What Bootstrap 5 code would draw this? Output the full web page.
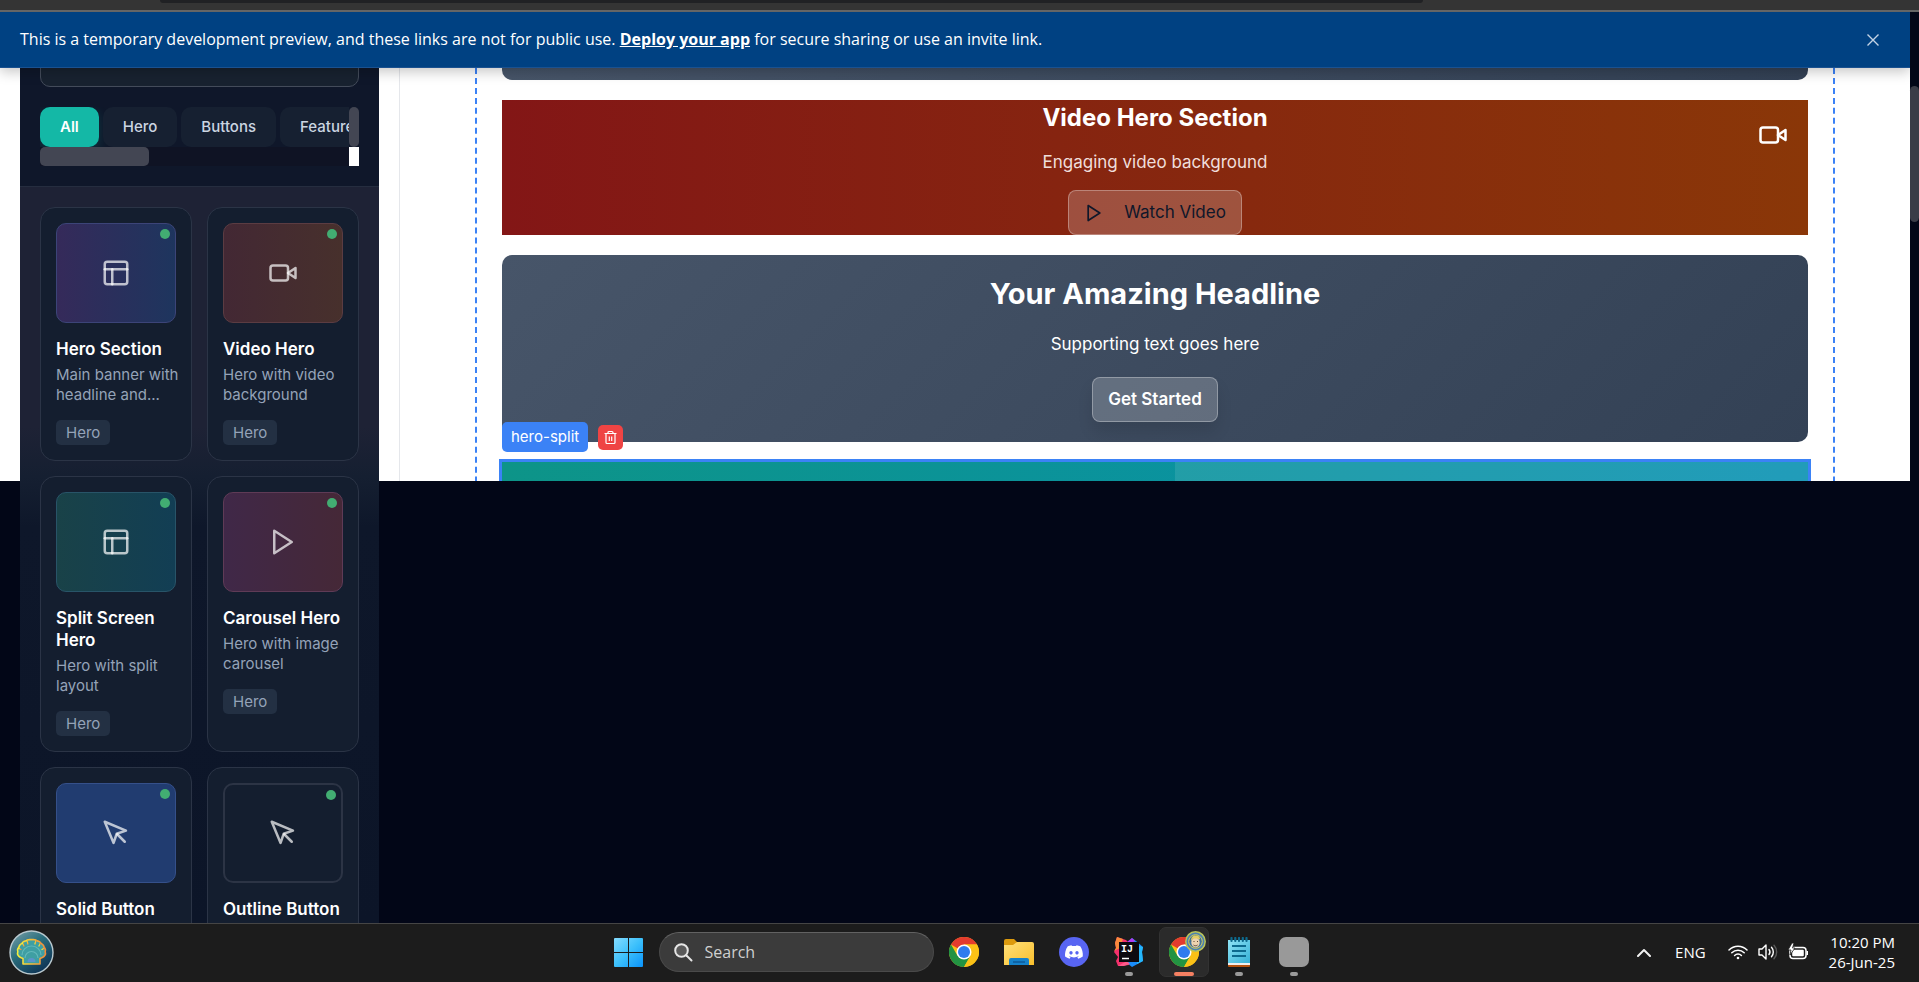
<!DOCTYPE html>
<html lang="en">
<head>
<meta charset="utf-8">
<meta name="viewport" content="width=device-width, initial-scale=1">
<title>Page builder preview</title>
<link href="https://cdn.jsdelivr.net/npm/bootstrap@5.3.0/dist/css/bootstrap.min.css" rel="stylesheet">
<style>
  :root { --ink: #020617; --panel: #0f172a; --accent: #3b82f6; --sheet: calc(50vh - 78px); }
  body { font-family: Inter, sans-serif; font-size: 17px; line-height: 25px; background: var(--ink); color: #fff; }
  svg { display: block; flex: none; }
  .line-icon { fill: none; stroke: currentColor; stroke-width: 2; stroke-linecap: round; stroke-linejoin: round; }

  /* browser chrome */
  .browser-strip { height: 12px; background: #343434; border-bottom: 2px solid #656565; padding: 0 496px 0 160px; }
  .address-edge { height: 3px; background: #202124; border-radius: 0 0 8px 8px; }
  .notice { background: #004182; height: 56px; border-bottom: 1px solid #1a5190; box-shadow: 0 4px 12px rgba(0,0,0,.22); padding: 0 25px 0 20px; font-family: "Open Sans", sans-serif; font-size: 16px; z-index: 3; }
  .notice a { color: #fff; font-weight: 700; }
  .notice button { width: 24px; height: 24px; color: #c3d3e4; }
  .page-scroll { width: 9px; padding-top: 74px; }
  .page-scroll div { height: 136px; background: #3a3c47; border-radius: 5px; }

  .stage { background: linear-gradient(#fff, #fff) no-repeat 0 0 / 100% var(--sheet); padding-left: 20px; }

  /* sidebar */
  .sidebar { width: 359px; }
  .side-head { background: var(--panel); padding: 0 20px 20px; border-bottom: 1px solid #252d3f; }
  .side-search { height: 50px; margin-top: -31px; background: #182230; border: 1px solid #434b5a; border-radius: 10px; }
  .side-search:focus { background: #182230; }
  .filters { margin-top: 20px; }
  .filter-row { height: 40px; }
  .filter-row .btn { border: 0; border-radius: 10px; background: #162031; color: #cbd5e1; font-size: 15px; font-weight: 500; line-height: 20px; padding: 10px 20px; }
  .filter-row .btn.active { background: #14b8a6; color: #fff; font-weight: 600; box-shadow: 0 4px 12px rgba(20,184,166,.2); }
  .thumb-bar { background: #434653; border-radius: 5px; }
  .thumb-v { width: 10px; }
  .track-h { height: 19px; background: #0f1324; }
  .track-h .thumb-bar { width: 109px; }
  .corner { width: 10px; background: #fff; }
  .side-list { padding: 20px; background: linear-gradient(#1e2235 240px, #151f31 290px, #0e172a 340px, #0c1528 100%); }
  .comp-grid { display: grid; grid-template-columns: 1fr 1fr; gap: 15px; }
  .comp { background: #141e2f; border: 1px solid #2b3446; border-radius: 15px; padding: 15px; }
  .preview { height: 100px; border: 1px solid; border-radius: 10px; color: rgba(255,255,255,.7); }
  .dot { width: 10px; height: 10px; top: 5px; right: 5px; background: #42ad72; border-radius: 50%; }
  .comp h3 { font-size: 17px; font-weight: 600; line-height: 22px; margin: 15px 0 5px; }
  .comp p { font-size: 15px; line-height: 20px; color: #94a3b8; margin: 0 -10px 15px 0; }
  .tagchip { display: block; width: fit-content; font-size: 15px; line-height: 25px; background: #233043; color: #94a3b8; border-radius: 5px; padding: 0 10px; }
  .p-hero { background: linear-gradient(90deg, #352a5a, #1e355e); border-color: #3c4478; }
  .p-video { background: linear-gradient(90deg, #432834, #47302c); border-color: #5b3c42; }
  .p-split { background: linear-gradient(90deg, #194248, #123e54); border-color: #285468; }
  .p-carousel { background: linear-gradient(90deg, #402848, #452837); border-color: #5f3b56; }
  .p-solid { background: #213c70; border-color: #35508a; }
  .p-outline { border-color: #2c3445; border-width: 2px; }

  /* canvas */
  .canvas { height: var(--sheet); margin-left: 20px; border-left: 1px solid #e5e7eb; padding: 0 75px; }
  .drop { border: dashed var(--accent); border-width: 0 2px; padding: 0 25px; gap: 20px; }
  .slate { background: linear-gradient(135deg, #475569, #334155); border-radius: 10px; }
  .slate-tail { height: 12px; border-radius: 0 0 10px 10px; background: linear-gradient(90deg, #475569, #334155); }
  .video-hero { background: linear-gradient(90deg, #831616, #8a3708); gap: 15px; }
  .video-hero h2 { font-size: 24px; font-weight: 700; line-height: 35px; }
  .video-hero p { color: #f0dedb; }
  .cam { top: 20px; right: 20px; }
  .slate-hero { padding: 20px; gap: 20px; }
  .slate-hero h1 { font-size: 29px; font-weight: 700; line-height: 37px; }
  .glass { height: 45px; font-size: 17px; border: 1px solid rgba(255,255,255,.3); background: rgba(255,255,255,.2); border-radius: 8px; padding: 0 15px; }
  .glass:hover { background: rgba(255,255,255,.3); }
  .glass.cast { color: #fff; font-weight: 600; box-shadow: 0 10px 15px rgba(0,0,0,.1); }
  .glass.dark { color: var(--panel); }
  .split-hero { height: 200px; outline: 3px solid var(--accent); background: linear-gradient(90deg, #0d9488, #0891b2); display: grid; grid-template-columns: 673fr 633fr; }
  .split-hero .half { grid-column: 2; background: rgba(255,255,255,.1); }
  .sel-tag { top: -40px; left: 0; gap: 10px; }
  .sel-tag span { background: var(--accent); border-radius: 5px; font-size: 15px; line-height: 30px; padding: 0 9px; }
  .sel-tag button { background: #ef4444; width: 25px; height: 25px; border-radius: 5px; color: #fff; }

  /* taskbar */
  .taskbar { height: 59px; background: #1c1c1c; border-top: 1px solid #454545; display: grid; grid-template-columns: 1fr auto 1fr; align-items: center; padding: 0 0 2px 3px; font-family: "Open Sans", sans-serif; z-index: 4; }
  .orb { padding-left: 6px; }
  .tile { width: 50px; height: 50px; border: 1px solid transparent; border-radius: 7px; padding: 0; }
  .tile.current { background: #2b2b2b; border-color: #323232; }
  .tile.open::after { content: ""; position: absolute; bottom: 0; left: 20px; width: 8px; height: 4px; border-radius: 2px; background: #9a9a9a; }
  .tile.current::after { left: 14px; width: 20px; background: #f58062; }
  .face { top: 3px; right: 2px; }
  .task-search { width: 275px; height: 40px; background: #3b3b3b; border: 1px solid #4a4a4a; border-top-color: #626262; border-radius: 20px; padding: 0 14px; gap: 12px; }
  .task-search input { background: none; border: 0; outline: 0; min-width: 0; font-size: 16px; color: #fff; padding: 0; }
  .task-search input::placeholder { color: #d0d0d0; opacity: 1; }
  .tray { padding-right: 24px; font-size: 15px; line-height: 20px; }
  .tray .status { gap: 10px; margin: 0 20px 0 22px; }
</style>
</head>
<body class="vh-100 overflow-hidden d-flex flex-column">

<svg class="d-none" aria-hidden="true">
  <symbol id="i-layout" viewBox="0 0 24 24"><rect x="3" y="3" width="18" height="18" rx="2"/><path d="M3 9h18"/><path d="M9 21V9"/></symbol>
  <symbol id="i-video" viewBox="0 0 24 24"><path d="m22 8-6 4 6 4V8Z"/><rect x="2" y="6" width="14" height="12" rx="2"/></symbol>
  <symbol id="i-play" viewBox="0 0 24 24"><path d="M5 3l14 9-14 9V3z"/></symbol>
  <symbol id="i-pointer" viewBox="0 0 24 24"><path d="m3 3 7.07 16.97 2.51-7.39 7.39-2.51L3 3z"/><path d="m13 13 6 6"/></symbol>
  <symbol id="i-chrome" viewBox="0 0 48 48">
    <circle cx="24" cy="24" r="24" fill="#fbc116"/>
    <path d="M24 24 3.2 12A24 24 0 0 1 44.8 12H24z" fill="#e33b2e"/>
    <path d="M3.2 12A24 24 0 0 0 24 48L34.4 30 24 24 13.6 30z" fill="#229342"/>
    <path d="M24 48A24 24 0 0 0 44.8 12H24L34.4 30z" fill="#fbc116"/>
    <circle cx="24" cy="24" r="12" fill="#fff"/><circle cx="24" cy="24" r="9.6" fill="#2f7bed"/>
  </symbol>
</svg>

<div class="browser-strip flex-shrink-0"><div class="address-edge"></div></div>

<div class="d-flex flex-grow-1 overflow-hidden">
  <div class="d-flex flex-column flex-grow-1 overflow-hidden">
    <div class="notice d-flex align-items-center justify-content-between flex-shrink-0 position-relative">
      <span>This is a temporary development preview, and these links are not for public use. <a href="#">Deploy your app</a> for secure sharing or use an invite link.</span>
      <button class="btn p-0 border-0 d-flex align-items-center justify-content-center" aria-label="Close">
        <svg width="12" height="12" viewBox="0 0 12 12" stroke="currentColor" stroke-width="1.4"><path d="M.5.5l11 11M11.5.5l-11 11"/></svg>
      </button>
    </div>

    <div class="stage d-flex flex-grow-1 overflow-hidden">
      <aside class="sidebar d-flex flex-column flex-shrink-0">
        <div class="side-head">
          <input class="side-search form-control" type="search" aria-label="Search components">
          <div class="filters">
            <div class="d-flex">
              <div class="filter-row d-flex flex-grow-1 overflow-hidden gap-1" style="width:0">
                <button class="btn active">All</button>
                <button class="btn">Hero</button>
                <button class="btn">Buttons</button>
                <button class="btn">Features</button>
              </div>
              <div class="thumb-bar thumb-v"></div>
            </div>
            <div class="track-h d-flex justify-content-between"><div class="thumb-bar"></div><div class="corner"></div></div>
          </div>
        </div>
        <div class="side-list flex-grow-1 overflow-hidden">
          <div class="comp-grid">
            <article class="comp">
              <div class="preview p-hero position-relative d-flex align-items-center justify-content-center"><span class="dot position-absolute"></span><svg class="line-icon" width="30" height="30"><use href="#i-layout"/></svg></div>
              <h3>Hero Section</h3><p>Main banner with headline and...</p><span class="tagchip">Hero</span>
            </article>
            <article class="comp">
              <div class="preview p-video position-relative d-flex align-items-center justify-content-center"><span class="dot position-absolute"></span><svg class="line-icon" width="30" height="30"><use href="#i-video"/></svg></div>
              <h3>Video Hero</h3><p>Hero with video background</p><span class="tagchip">Hero</span>
            </article>
            <article class="comp">
              <div class="preview p-split position-relative d-flex align-items-center justify-content-center"><span class="dot position-absolute"></span><svg class="line-icon" width="30" height="30"><use href="#i-layout"/></svg></div>
              <h3>Split Screen Hero</h3><p>Hero with split layout</p><span class="tagchip">Hero</span>
            </article>
            <article class="comp">
              <div class="preview p-carousel position-relative d-flex align-items-center justify-content-center"><span class="dot position-absolute"></span><svg class="line-icon" width="30" height="30"><use href="#i-play"/></svg></div>
              <h3>Carousel Hero</h3><p>Hero with image carousel</p><span class="tagchip">Hero</span>
            </article>
            <article class="comp">
              <div class="preview p-solid position-relative d-flex align-items-center justify-content-center"><span class="dot position-absolute"></span><svg class="line-icon" width="30" height="30"><use href="#i-pointer"/></svg></div>
              <h3>Solid Button</h3>
            </article>
            <article class="comp">
              <div class="preview p-outline position-relative d-flex align-items-center justify-content-center"><span class="dot position-absolute"></span><svg class="line-icon" width="30" height="30"><use href="#i-pointer"/></svg></div>
              <h3>Outline Button</h3>
            </article>
          </div>
        </div>
      </aside>

      <main class="canvas flex-grow-1 overflow-hidden">
        <div class="drop d-flex flex-column">
          <div class="slate-tail"></div>

          <section class="video-hero position-relative d-flex flex-column align-items-center text-center">
            <h2 class="m-0">Video Hero Section</h2>
            <p class="m-0">Engaging video background</p>
            <button class="btn glass dark d-flex align-items-center">
              <svg class="line-icon me-3" width="20" height="20"><use href="#i-play"/></svg>
              <span class="ps-1">Watch Video</span>
            </button>
            <svg class="cam line-icon position-absolute" width="30" height="30"><use href="#i-video"/></svg>
          </section>

          <section class="slate slate-hero d-flex flex-column align-items-center text-center">
            <h1 class="m-0">Your Amazing Headline</h1>
            <p class="m-0">Supporting text goes here</p>
            <button class="btn glass cast">Get Started</button>
          </section>

          <section class="split-hero position-relative">
            <div class="half"></div>
            <div class="sel-tag position-absolute d-flex align-items-center">
              <span>hero-split</span>
              <button class="btn p-0 border-0 d-flex align-items-center justify-content-center" aria-label="Delete">
                <svg width="15" height="15" viewBox="0 0 15 15" fill="none" stroke="currentColor" stroke-width="1.2"><path d="M1.500 3.500h12M5 3.500v-1a1 1 0 0 1 1-1h3a1 1 0 0 1 1 1v1M3 3.500v9a1 1 0 0 0 1 1h7a1 1 0 0 0 1-1v-9M6.300 6.500v4.500M8.700 6.500v4.500"/></svg>
              </button>
            </div>
          </section>
        </div>
      </main>
    </div>
  </div>
  <div class="page-scroll flex-shrink-0"><div></div></div>
</div>

<footer class="taskbar flex-shrink-0 position-relative">
  <div class="orb">
    <svg width="45" height="45" viewBox="0 0 45 45" role="img" aria-label="Shell">
      <defs>
        <linearGradient id="g-orb" x1="0" y1="0" x2=".7" y2="1"><stop offset="0" stop-color="#7fa3ad"/><stop offset=".45" stop-color="#2b6f7d"/><stop offset="1" stop-color="#0d3355"/></linearGradient>
        <linearGradient id="g-rim" x1="0" x2="1"><stop offset="0" stop-color="#f5ee3c"/><stop offset="1" stop-color="#f08a3c"/></linearGradient>
      </defs>
      <circle cx="22.500" cy="22.500" r="21.500" fill="url(#g-orb)" stroke="#b9c9cf" stroke-width="1.400"/>
      <path d="M14 34v-5.500c-3-1-5-2.500-5.500-4.500 0-1.500.8-2.300 0-4 .5-2 1.500-2.500 2-4.500 1-1.800 2.500-1.500 3.500-3.500 1.500-1.200 2.800-.6 4.200-2 1.500-.7 2.800-.2 4.300-.5 1.500.3 2.800-.2 4.300.5 1.400 1.400 2.700.8 4.200 2 1 2 2.500 1.700 3.500 3.500.5 2 1.500 2.500 2 4.500-.8 1.700 0 2.500 0 4-.5 2-2.500 3.500-5.500 4.500V34z" fill="#3f9fa3" stroke="url(#g-rim)" stroke-width="1.600" stroke-linejoin="round"/>
      <g fill="none" stroke="#63b9bb" stroke-width="1.200"><path d="M13 25a9.500 9 0 0 1 19 0"/><path d="M16 28a6.500 6.500 0 0 1 13 0"/></g>
      <g stroke="url(#g-rim)" stroke="#f0a83c" stroke-width="1.300" stroke-linecap="round"><path d="M13.500 13l1.500 3"/><path d="M18 10.500l1 3.500"/><path d="M27 10.500l-1 3.500"/><path d="M31.500 13l-1.500 3"/><path d="M9.500 18l2.500 1.500"/><path d="M35.500 18l-2.500 1.500"/></g>
      <path d="M18.500 32a4 4 0 0 1 8 0z" fill="#5b93cb"/>
    </svg>
  </div>

  <div class="d-flex align-items-center" style="gap:5px">
    <button class="btn tile d-flex align-items-center justify-content-center" aria-label="Start">
      <svg width="29" height="29" viewBox="0 0 29 29"><defs><linearGradient id="g-win" gradientUnits="userSpaceOnUse" x1="0" y1="0" x2="29" y2="29"><stop offset="0" stop-color="#85dcff"/><stop offset=".5" stop-color="#3cc0fb"/><stop offset="1" stop-color="#0a93fb"/></linearGradient></defs><path fill="url(#g-win)" d="M1 0h13v14H0V1a1 1 0 0 1 1-1zM15 0h13a1 1 0 0 1 1 1v13H15zM0 15h14v14H1a1 1 0 0 1-1-1zM15 15h14v13a1 1 0 0 1-1 1H15z"/></svg>
    </button>
    <label class="task-search d-flex align-items-center">
      <svg width="19" height="19" viewBox="0 0 19 19" fill="#5a5a5a" stroke="#e6e6e6" stroke-width="2" stroke-linecap="round"><circle cx="7.500" cy="7.500" r="6.300"/><path d="M12.500 12.500l5 5"/></svg>
      <input type="text" placeholder="Search" aria-label="Search">
    </label>
    <button class="btn tile d-flex align-items-center justify-content-center" aria-label="Chrome"><svg width="30" height="30"><use href="#i-chrome"/></svg></button>
    <button class="btn tile d-flex align-items-center justify-content-center" aria-label="Files">
      <svg width="30" height="30" viewBox="0 0 30 30"><defs><linearGradient id="g-fold" x1="0" y1="0" x2="1" y2="1"><stop offset="0" stop-color="#ffe07a"/><stop offset="1" stop-color="#f9bf2c"/></linearGradient></defs><path d="M0 4a2 2 0 0 1 2-2h8l3 3v4H0z" fill="#dc9a0d"/><path d="M0 8h9l4-3h15a2 2 0 0 1 2 2v21H0z" fill="url(#g-fold)"/><path d="M5 28v-5a2 2 0 0 1 2-2h16a2 2 0 0 1 2 2v5z" fill="#1682ca"/><path d="M9 25h12" stroke="#0b5391" stroke-width="1.300"/></svg>
    </button>
    <button class="btn tile d-flex align-items-center justify-content-center" aria-label="Discord">
      <svg width="30" height="30" viewBox="0 0 30 30"><circle cx="15" cy="15" r="15" fill="#5865f2"/><path transform="translate(6 6) scale(.75)" fill="#fff" d="M20.300 4.400A19.800 19.800 0 0 0 15.400 2.900l-.6 1.200a18.300 18.300 0 0 0-5.500 0L8.600 2.900A19.700 19.700 0 0 0 3.700 4.400C.5 9-.3 13.600.1 18.100a19.900 19.900 0 0 0 6 3l1.300-2-2-1 .4-.3a14.200 14.200 0 0 0 12.200 0l.4.300-2 1 1.300 2a19.800 19.800 0 0 0 6-3c.500-5.200-.8-9.700-3.400-13.700zM8 15.300c-1.200 0-2.200-1.100-2.200-2.400S6.800 10.500 8 10.500s2.200 1.100 2.200 2.400-1 2.400-2.200 2.400zm8 0c-1.200 0-2.200-1.100-2.200-2.400s1-2.400 2.200-2.400 2.200 1.100 2.200 2.400-1 2.400-2.200 2.400z"/></svg>
    </button>
    <button class="btn tile open position-relative d-flex align-items-center justify-content-center" aria-label="IntelliJ IDEA">
      <svg width="30" height="30" viewBox="0 0 30 30"><path d="M3 0l9 3 3 3v22L4 29l-2-5 2-4-4-5 2-4-1-5z" fill="#f4306b"/><path d="M3 0l6 2-3 9-6 3 2-3-1-5z" fill="#fb8a3c"/><path d="M18 1l4 3 7 6-1 5 1 9-11 6-5-4V6z" fill="#1a8dfa"/><path d="M18 1l3 3-5 3-3-2z" fill="#b23bf0"/><path d="M29 10l-1 5 1 9-6 3V8z" fill="#25b7fb"/><path d="M4 29l9-5 3 3-6 2z" fill="#ff5a8a"/><rect x="5" y="5" width="20" height="20" fill="#0d0a10"/><text x="7" y="15" font-family="Liberation Mono, monospace" font-weight="700" font-size="10" fill="#fff">IJ</text><path d="M8 21.500h7" stroke="#fff" stroke-width="1.500"/></svg>
    </button>
    <button class="btn tile open current position-relative d-flex align-items-center justify-content-center" aria-label="Chrome window">
      <svg width="30" height="30"><use href="#i-chrome"/></svg>
      <svg class="face position-absolute" width="21" height="21" viewBox="0 0 21 21"><circle cx="10.500" cy="10.500" r="9.700" fill="#4d82b0" stroke="#b9c45a" stroke-width="1.500"/><circle cx="10.500" cy="10.500" r="6.800" fill="#3e7099" stroke="#d8d15a" stroke-width="1"/><ellipse cx="10.500" cy="11.500" rx="4.200" ry="5" fill="#edd3b0"/><path d="M6 10c0-5 3-6 5-5.500 3 0 4 2 4 4l-3-1-4 0z" fill="#e6cf63"/><path d="M8.500 14c1 1 3 1 4 0M8.500 10.500h1M12 10.500h1" stroke="#5b4433" stroke-width="1" fill="none"/></svg>
    </button>
    <button class="btn tile open position-relative d-flex align-items-center justify-content-center" aria-label="Notepad">
      <svg width="22" height="30" viewBox="0 0 22 30"><defs><linearGradient id="g-note" x1="0" y1="0" x2="1" y2="1"><stop offset="0" stop-color="#8fe3f5"/><stop offset="1" stop-color="#35b1d6"/></linearGradient></defs><path d="M0 26h22v3a1 1 0 0 1-1 1H1a1 1 0 0 1-1-1z" fill="#b5530f"/><path d="M0 24h22v4H0z" fill="#f1efee"/><path d="M0 3h22v23H0z" fill="url(#g-note)"/><g stroke="#0d6a8e"><path d="M4 9h14M4 14h14M4 19h14" stroke-width="1.800"/><path d="M3.500 1v3M7.300 1v3M11 1v3M14.800 1v3M18.500 1v3" stroke-width="2.200" stroke-linecap="round"/></g></svg>
    </button>
    <button class="btn tile open position-relative d-flex align-items-center justify-content-center" aria-label="App"><svg width="30" height="30"><rect width="30" height="30" rx="7" fill="#999"/></svg></button>
  </div>

  <div class="tray d-flex align-items-center justify-content-end">
    <svg class="me-4" width="14" height="9" viewBox="0 0 14 9" fill="none" stroke="#f2f2f2" stroke-width="2" stroke-linecap="round" stroke-linejoin="round"><path d="M1 8l6-6 6 6"/></svg>
    <span>ENG</span>
    <div class="status d-flex align-items-center">
      <svg width="20" height="16" viewBox="0 0 20 16" fill="none" stroke="#fff" stroke-width="1.500" stroke-linecap="round"><path d="M1 6a12.700 12.700 0 0 1 18 0M3.800 8.800a8.800 8.800 0 0 1 12.400 0M6.600 11.500a4.800 4.800 0 0 1 6.800 0"/><circle cx="10" cy="14" r="1.300" fill="#fff" stroke="none"/></svg>
      <svg width="20" height="18" viewBox="0 0 20 18" fill="none" stroke="#fff" stroke-width="1.400" stroke-linecap="round" stroke-linejoin="round"><path d="M1 6v6h3l4 4V2L4 6z"/><path d="M11 6.500a4 4 0 0 1 0 5M13.500 4.300a7 7 0 0 1 0 9.400"/><path d="M16 2.200a10 10 0 0 1 0 13.600" stroke="#5a5a5a"/></svg>
      <svg width="21" height="18" viewBox="0 0 21 18"><rect x="2" y="4.500" width="16" height="11" rx="3" fill="none" stroke="#fff" stroke-width="1.500"/><rect x="4.200" y="6.700" width="11.600" height="6.600" rx="1" fill="#fff"/><path d="M18.500 8h1.500v4h-1.500z" fill="#fff"/><path d="M4 0L0 7h3l-1 5 5-7H4.500L6 0z" fill="#fff" stroke="#1c1c1c" stroke-width=".8"/></svg>
    </div>
    <div class="text-end">10:20 PM<br>26-Jun-25</div>
  </div>
</footer>

<script src="https://cdn.jsdelivr.net/npm/bootstrap@5.3.0/dist/js/bootstrap.bundle.min.js"></script>
</body>
</html>
